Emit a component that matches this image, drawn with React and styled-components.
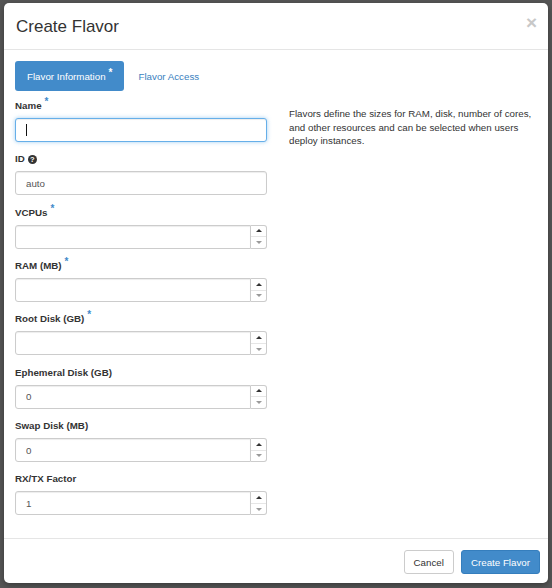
import styled, { createGlobalStyle } from "styled-components";

const GlobalStyle = createGlobalStyle`
  html, body {
    margin: 0;
    padding: 0;
    background: #565656;
  }
  body {
    font-family: "Liberation Sans", Arial, Helvetica, sans-serif;
    font-size: 9.75px;
    color: #333;
  }
  * { box-sizing: border-box; }
`;

const fields = [
  { label: "ID", help: true, value: "auto" },
  { label: "VCPUs", required: true, number: true, value: "" },
  { label: "RAM (MB)", required: true, number: true, value: "" },
  { label: "Root Disk (GB)", required: true, number: true, value: "" },
  { label: "Ephemeral Disk (GB)", number: true, value: "0" },
  { label: "Swap Disk (MB)", number: true, value: "0" },
  { label: "RX/TX Factor", number: true, value: "1" },
];

const App = () => {
  return (
    <Backdrop>
      <GlobalStyle />
      <Modal>
        <Header>
          <Title>Create Flavor</Title>
          <Close>×</Close>
        </Header>
        <Body>
          <Tabs>
            <Tab $active>
              Flavor Information<Star $light>*</Star>
            </Tab>
            <Tab>Flavor Access</Tab>
          </Tabs>
          <Columns>
            <div>
              <Group>
                <Label>
                  Name<Star>*</Star>
                </Label>
                <FocusWrap>
                  <TextInput $focused readOnly value="" />
                  <Caret />
                </FocusWrap>
              </Group>
              {fields.map((f) => (
                <Group key={f.label}>
                  <Label>
                    {f.label}
                    {f.required && <Star>*</Star>}
                    {f.help && <Help>?</Help>}
                  </Label>
                  {f.number ? (
                    <NumberBox>
                      <TextInput $number readOnly value={f.value} />
                      <Spinner>
                        <Arrow />
                        <Arrow $down />
                      </Spinner>
                    </NumberBox>
                  ) : (
                    <TextInput readOnly value={f.value} />
                  )}
                </Group>
              ))}
            </div>
            <Description>
              Flavors define the sizes for RAM, disk, number of cores, and
              other resources and can be selected when users deploy instances.
            </Description>
          </Columns>
        </Body>
        <Footer>
          <Button>Cancel</Button>
          <Button $primary>Create Flavor</Button>
        </Footer>
      </Modal>
    </Backdrop>
  );
};

const Backdrop = styled.div`
  padding: 3px 4px 5px 4px;
  min-height: 588px;
`;

const Modal = styled.div`
  width: 544px;
  height: 580px;
  background: #fff;
  border-radius: 5px;
  box-shadow: 0 2px 6px rgba(0, 0, 0, 0.35);
  display: flex;
  flex-direction: column;
`;

const Header = styled.div`
  display: flex;
  align-items: flex-start;
  justify-content: space-between;
  padding: 13px 11px 11px 12px;
  border-bottom: 1px solid #e5e5e5;
  height: 47px;
`;

const Title = styled.h4`
  margin: 0;
  font-size: 17px;
  font-weight: normal;
  line-height: 22px;
  color: #333;
`;

const Close = styled.span`
  font-size: 19px;
  font-weight: bold;
  line-height: 14px;
  color: #c8c8c8;
`;

const Body = styled.div`
  flex: 1;
  padding: 11px 11px 0 11px;
`;

const Tabs = styled.div`
  display: flex;
  gap: 2px;
  margin-bottom: 8px;
`;

const Tab = styled.div`
  height: 30px;
  padding: 0 12px;
  display: flex;
  align-items: center;
  border-radius: 3px;
  background: ${(p) => (p.$active ? "#428bca" : "transparent")};
  color: ${(p) => (p.$active ? "#fff" : "#3a7fc0")};
`;

const Star = styled.span`
  color: ${(p) => (p.$light ? "#fff" : "#428bca")};
  font-size: 10px;
  font-weight: bold;
  position: relative;
  top: -4px;
  margin-left: 3px;
`;

const Columns = styled.div`
  display: grid;
  grid-template-columns: 252px 1fr;
  column-gap: 22px;
`;

const Group = styled.div`
  margin-bottom: 10.35px;
`;

const Label = styled.div`
  font-weight: bold;
  line-height: 14px;
  margin-bottom: 5px;
  display: flex;
  align-items: center;
  color: #333;
`;

const Help = styled.span`
  width: 9px;
  height: 9px;
  border-radius: 50%;
  background: #333;
  color: #fff;
  font-size: 7.5px;
  font-weight: bold;
  line-height: 9px;
  text-align: center;
  margin-left: 3px;
`;

const TextInput = styled.input`
  display: block;
  width: 100%;
  height: 24px;
  padding: 0 10px;
  font-family: inherit;
  font-size: 9.75px;
  color: #555;
  background: #fff;
  border: 1px solid ${(p) => (p.$focused ? "#66afe9" : "#ccc")};
  border-radius: ${(p) => (p.$number ? "3px 0 0 3px" : "3px")};
  box-shadow: ${(p) =>
    p.$focused
      ? "inset 0 1px 1px rgba(0,0,0,.075), 0 0 4px rgba(102,175,233,.6)"
      : "inset 0 1px 1px rgba(0,0,0,.075)"};
  outline: none;
`;

const FocusWrap = styled.div`
  position: relative;
`;

const Caret = styled.span`
  position: absolute;
  left: 11px;
  top: 6px;
  width: 1px;
  height: 12px;
  background: #111;
`;

const NumberBox = styled.div`
  display: flex;
  height: 24px;
`;

const Spinner = styled.div`
  width: 17px;
  display: flex;
  flex-direction: column;
  border: 1px solid #ccc;
  border-left: none;
  border-radius: 0 3px 3px 0;
`;

const Arrow = styled.span`
  flex: 1;
  display: flex;
  align-items: center;
  justify-content: center;
  border-top: ${(p) => (p.$down ? "1px solid #e6e6e6" : "none")};
  &::after {
    content: "";
    border-left: 3px solid transparent;
    border-right: 3px solid transparent;
    ${(p) =>
      p.$down
        ? "border-top: 3px solid #9a9a9a;"
        : "border-bottom: 3px solid #333;"}
  }
`;

const Description = styled.p`
  margin: 8px 0 0 0;
  line-height: 13.5px;
  color: #333;
`;

const Footer = styled.div`
  display: flex;
  justify-content: flex-end;
  gap: 7px;
  padding: 11px 8px 0 0;
  height: 45px;
  border-top: 1px solid #e5e5e5;
`;

const Button = styled.button`
  height: 24px;
  padding: 0 9px;
  font-family: inherit;
  font-size: 9.75px;
  border-radius: 3px;
  border: 1px solid ${(p) => (p.$primary ? "#357ebd" : "#ccc")};
  background: ${(p) => (p.$primary ? "#428bca" : "#fff")};
  color: ${(p) => (p.$primary ? "#fff" : "#333")};
`;

export default App;
